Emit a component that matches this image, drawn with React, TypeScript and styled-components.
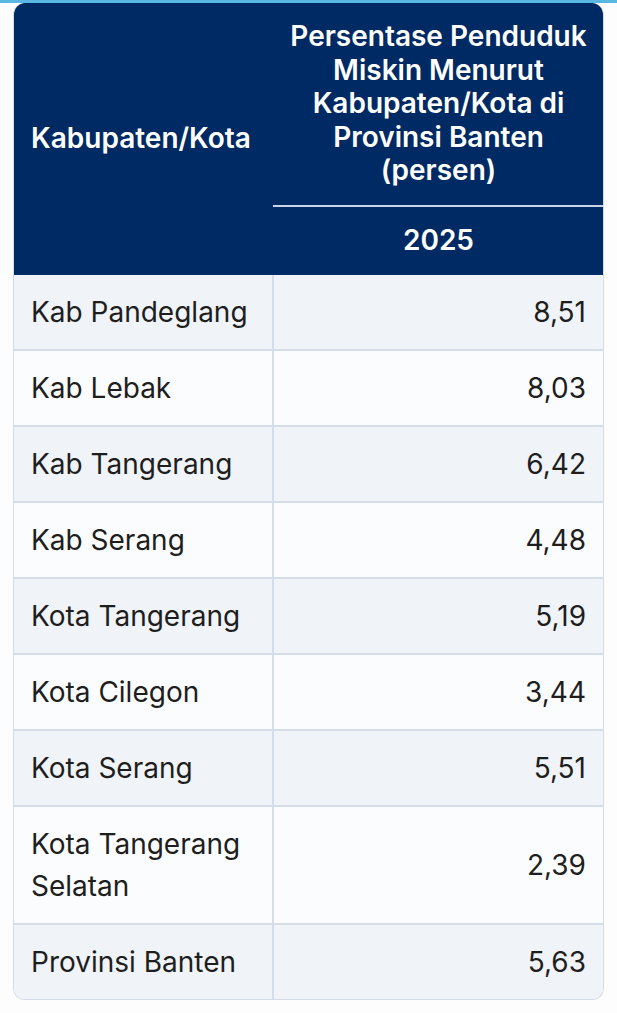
import React from "react";
import styled, { createGlobalStyle } from "styled-components";

const Global = createGlobalStyle`
  html, body { margin: 0; padding: 0; background: #fdfdfe; }
  body { font-family: Inter, "Noto Sans", sans-serif; }
`;

const TopLine = styled.div`
  height: 3px;
  background: #5ab6e2;
`;

const Wrap = styled.div`
  padding: 0 13px;
`;

const Frame = styled.div`
  border: 1px solid #d3dbe6;
  border-top: none;
  border-radius: 12px;
  overflow: hidden;
`;

const Table = styled.table`
  width: 100%;
  border-collapse: collapse;
  table-layout: fixed;
  font-size: 28px;
  color: #1e1e1e;
`;

const Th = styled.th<{ $align?: string }>`
  background: #002a63;
  color: #ffffff;
  font-weight: 600;
  line-height: 1.2;
  padding: 17px 16px 17px 17px;
  text-align: ${(p) => p.$align || "center"};
  vertical-align: middle;
`;

const SubTh = styled(Th)`
  border-top: 2px solid #c9d5e6;
`;

const Tr = styled.tr<{ $odd: boolean }>`
  background: ${(p) => (p.$odd ? "#f0f4f9" : "#fbfcfd")};
  &:not(:last-child) td { border-bottom: 2px solid #d5dde8; }
`;

const Td = styled.td<{ $num?: boolean }>`
  padding: 16px 17px 16px 17px;
  line-height: 1.5;
  font-weight: 400;
  text-align: ${(p) => (p.$num ? "right" : "left")};
  vertical-align: middle;
  border-left: ${(p) => (p.$num ? "2px solid #d5dde8" : "none")};
`;

const rows: [string, string][] = [
  ["Kab Pandeglang", "8,51"],
  ["Kab Lebak", "8,03"],
  ["Kab Tangerang", "6,42"],
  ["Kab Serang", "4,48"],
  ["Kota Tangerang", "5,19"],
  ["Kota Cilegon", "3,44"],
  ["Kota Serang", "5,51"],
  ["Kota Tangerang Selatan", "2,39"],
  ["Provinsi Banten", "5,63"],
];

export default function App() {
  return (
    <>
      <Global />
      <TopLine />
      <Wrap>
        <Frame>
          <Table>
            <colgroup>
              <col style={{ width: 259 }} />
              <col />
            </colgroup>
            <thead>
              <tr>
                <Th rowSpan={2} $align="left">Kabupaten/Kota</Th>
                <Th>
                  Persentase Penduduk Miskin Menurut Kabupaten/Kota di Provinsi Banten (persen)
                </Th>
              </tr>
              <tr>
                <SubTh>2025</SubTh>
              </tr>
            </thead>
            <tbody>
              {rows.map(([name, val], i) => (
                <Tr key={name} $odd={i % 2 === 0}>
                  <Td>{name}</Td>
                  <Td $num>{val}</Td>
                </Tr>
              ))}
            </tbody>
          </Table>
        </Frame>
      </Wrap>
    </>
  );
}
